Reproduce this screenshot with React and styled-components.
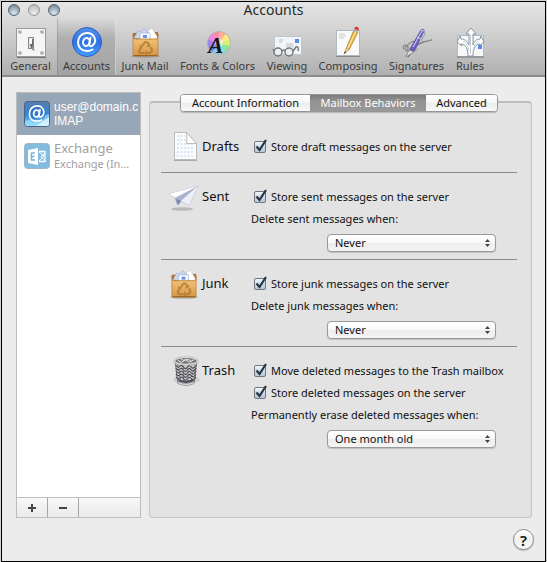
import React, { useState } from "react";
import styled, { createGlobalStyle, css } from "styled-components";

const sans = `"Noto Sans", "Open Sans", sans-serif`;

const GlobalStyle = createGlobalStyle`
  *, *::before, *::after { box-sizing: border-box; }
  body { margin: 0; background: #d4d4d4; font-family: ${sans}; font-size: 11px; color: #111; }
  button, select, input { font: inherit; color: inherit; margin: 0; }
`;

const Window = styled.div`
  display: flex;
  flex-direction: column;
  min-height: calc(100vh - 1px);
  margin: 1px 1px 0;
  border: 1px solid #000;
  background: #ececec;
`;

const Header = styled.header`
  display: flex;
  flex-direction: column;
  height: 75px;
  background: linear-gradient(#e6e6e6, #cfcfcf 45%, #b0b0b0);
  border-bottom: 2px solid #8c8c8c;
`;

const TitleBar = styled.div`
  display: grid;
  grid-template-columns: 60px 1fr 60px;
  align-items: center;
  height: 16px;
  padding: 0 6px;
`;

const Lights = styled.div`
  display: flex;
  gap: 8px;
`;

const Light = styled.button`
  width: 12px;
  height: 12px;
  padding: 0;
  border: 1px solid ${(p) => (p.$pale ? "#999" : "#5b6670")};
  border-radius: 50%;
  background: ${(p) =>
    p.$pale
      ? "radial-gradient(circle at 50% 80%, #eee, #c4c4c4 70%, #aaa)"
      : "radial-gradient(circle at 50% 80%, #dde8ef, #93a4b2 60%, #667580)"};
`;

const Title = styled.h1`
  margin: 0;
  font-size: 14px;
  font-weight: 400;
  line-height: 16px;
  text-align: center;
  color: #2a2a2a;
`;

const Toolbar = styled.nav`
  display: flex;
  flex: 1;
  padding-left: 2px;
`;

const ToolButton = styled.button`
  display: flex;
  flex-direction: column;
  align-items: center;
  justify-content: flex-end;
  flex: 0 0 ${(p) => p.$width}px;
  padding: 0 0 2px;
  border: 0;
  background: none;
  color: #3a3a3a;
  font-size: 11px;
  line-height: 15px;
  white-space: nowrap;
  ${(p) =>
    p.$active &&
    css`
      background: linear-gradient(rgba(0, 0, 0, 0), rgba(0, 0, 0, 0.14) 35%, rgba(0, 0, 0, 0.08));
      border-left: 1px solid rgba(90, 90, 90, 0.25);
      border-right: 1px solid rgba(240, 240, 240, 0.5);
    `}
`;

const Main = styled.main`
  display: flex;
  flex: 1;
  gap: 8px;
  padding: 15px 13px 0 14px;
`;

const Sidebar = styled.aside`
  display: flex;
  flex-direction: column;
  flex: 0 0 125px;
  border: 1px solid #bdbdbd;
  background: #fff;
`;

const AccountList = styled.div`
  flex: 1;
`;

const Account = styled.button`
  display: flex;
  align-items: center;
  gap: 4px;
  width: 100%;
  height: 42px;
  padding: 0 0 0 7px;
  overflow: hidden;
  border: 0;
  text-align: left;
  background: ${(p) => (p.$active ? "#98a7b7" : "#fff")};
  color: ${(p) => (p.$active ? "#fff" : "#a0a0a0")};
  svg { flex: none; }
`;

const AccountText = styled.span`
  display: flex;
  flex-direction: column;
  white-space: nowrap;
  line-height: ${(p) => (p.$plain ? 14 : 15)}px;
  font-size: ${(p) => (p.$plain ? 12 : 13)}px;
  font-family: ${(p) => (p.$plain ? `"Liberation Sans", Arial, sans-serif` : sans)};
`;

const AccountKind = styled.span`
  font-size: ${(p) => (p.$plain ? 12 : 11)}px;
`;

const SidebarFooter = styled.div`
  display: flex;
  height: 20px;
  border-top: 1px solid #bdbdbd;
  background: linear-gradient(#fafafa, #f0f0f0 50%, #ebebeb);
`;

const SmallButton = styled.button`
  display: grid;
  place-items: center;
  width: 31px;
  padding: 0;
  border: 0;
  border-right: 1px solid #a5a5a5;
  background: none;
`;

const Panel = styled.section`
  flex: 1;
  min-width: 0;
  margin-top: 9px;
  padding: 0 14px 0 11px;
  border: 1px solid #c6c6c6;
  border-top: 2px solid #bdbdbd;
  border-radius: 4px;
  background: #e3e3e3;
`;

const Tabs = styled.div`
  display: flex;
  width: 318px;
  height: 18px;
  margin: -9px auto 0;
  border: 1px solid #969696;
  border-radius: 4px;
  overflow: hidden;
  box-shadow: 0 1px 1px rgba(0, 0, 0, 0.2);
`;

const Tab = styled.button`
  flex: ${(p) => p.$grow} 1 0;
  padding: 0;
  border: 0;
  line-height: 16px;
  white-space: nowrap;
  background: linear-gradient(#fff, #f6f6f6 50%, #ececec 52%, #f8f8f8);
  ${(p) =>
    p.$active &&
    css`
      color: #fff;
      background: linear-gradient(#7d7d7d, #929292 40%, #999);
    `}
`;

const Group = styled.div`
  display: grid;
  grid-template-columns: 41px 49px 1fr;
  padding: 13px 0 7px;
  border-bottom: ${(p) => (p.$last ? "0" : "1px solid #8b8b8b")};
`;

const FirstGroup = styled(Group)`
  padding: 24px 0 14px;
`;

const GroupIcon = styled.div`
  display: flex;
  justify-content: flex-end;
  height: 22px;
  padding-right: 3px;
  align-items: center;
  svg { flex: none; overflow: visible; }
`;

const GroupName = styled.h2`
  margin: 0;
  font-size: 13px;
  font-weight: 400;
  line-height: 21px;
`;

const Fields = styled.div`
  display: flex;
  flex-direction: column;
  line-height: 22px;
  white-space: nowrap;
`;

const CheckLabel = styled.label`
  display: flex;
  align-items: center;
  gap: 5px;
  height: 22px;
  padding-left: 3px;
`;

const CheckCell = styled.span`
  display: grid;
  place-items: center;
  width: 12px;
  height: 12px;
  > * { grid-area: 1 / 1; }
  svg { pointer-events: none; overflow: visible; }
`;

const CheckInput = styled.input`
  appearance: none;
  width: 12px;
  height: 12px;
  border: 1px solid #6f7780;
  border-radius: 2px;
  background: linear-gradient(#f4f8fb, #cbd9e4 50%, #b8c9d7);
`;

const SelectBox = styled.div`
  position: relative;
  width: 169px;
  height: 18px;
  margin: 4px 0 0 76px;
  svg {
    position: absolute;
    right: 6px;
    top: 5px;
    pointer-events: none;
  }
`;

const Select = styled.select`
  display: block;
  appearance: none;
  width: 100%;
  height: 18px;
  padding: 0 20px 0 7px;
  border: 1px solid #999;
  border-radius: 4px;
  background: linear-gradient(#fff, #f8f8f8 50%, #ededed 52%, #f5f5f5);
  box-shadow: 0 1px 1px rgba(0, 0, 0, 0.15);
  line-height: 16px;
`;

const Footer = styled.footer`
  display: flex;
  justify-content: flex-end;
  padding: 11px 11px 11px 0;
`;

const HelpButton = styled.button`
  width: 21px;
  height: 21px;
  padding: 0;
  border: 1px solid #8c8c8c;
  border-radius: 50%;
  background: linear-gradient(#fff, #f0f0f0 50%, #fafafa);
  box-shadow: 0 1px 1px rgba(0, 0, 0, 0.25);
  font-size: 15px;
  font-weight: 600;
  line-height: 18px;
`;

const GeneralIcon = () => (
  <svg width="32" height="31" viewBox="0 0 32 31">
    <rect x="1.5" y="1.5" width="29" height="28" fill="#f5f5f5" stroke="#999" />
    <path d="M2 30.5h29" stroke="#777" />
    {[[5, 5], [27, 5], [5, 26], [27, 26]].map(([x, y]) => (
      <g key={`${x}-${y}`}>
        <circle cx={x} cy={y} r="1.8" fill="#999" />
        <path d={`M${x - 1} ${y + 1}l2-2`} stroke="#eee" strokeWidth=".7" />
      </g>
    ))}
    <rect x="13.5" y="10.5" width="5" height="11" fill="#e4e4e4" stroke="#888" />
    <path d="M15 12h3v5l1 5-3-1-1-3z" fill="#666" />
    <path d="M15 12h2v5h-2z" fill="#fff" />
    <path d="M17 18l3 6-3-1z" fill="#999" />
  </svg>
);

const AtGlyph = ({ cx, cy, s }) => (
  <g transform={`translate(${cx} ${cy}) scale(${s})`} fill="none" stroke="#fff" strokeWidth="2" strokeLinecap="round">
    <ellipse cx="-.6" cy=".2" rx="3.3" ry="4" transform="rotate(18)" />
    <path d="M3.500-4.200L2.300 2c-.4 2.500 1.600 2.800 3.300 1.400C8 1.400 8.600-2 7.400-4.600 5.800-8 2.500-9.200-.6-9c-5 .3-8.400 4.500-8.400 9.300C-9 5.500-5.400 9 0 9c2.200 0 4-.5 5.600-1.500" />
  </g>
);

const AtIcon = () => (
  <svg width="32" height="32" viewBox="0 0 32 32">
    <defs>
      <linearGradient id="at-disc" x1="0" y1="0" x2="0" y2="1">
        <stop offset="0" stopColor="#5691e8" />
        <stop offset=".5" stopColor="#2f72e6" />
        <stop offset="1" stopColor="#42a0ff" />
      </linearGradient>
    </defs>
    <circle cx="16" cy="16" r="14.5" fill="url(#at-disc)" stroke="#2b5cc0" />
    <AtGlyph cx={16} cy={16} s={1} />
  </svg>
);

const BagIcon = ({ size = 31 }) => (
  <svg width={size} height={size} viewBox="0 0 31 31">
    <defs>
      <linearGradient id="bag" x1="0" y1="0" x2="0" y2="1">
        <stop offset="0" stopColor="#d39b4b" />
        <stop offset=".3" stopColor="#f0bd70" />
        <stop offset="1" stopColor="#d59645" />
      </linearGradient>
    </defs>
    <ellipse cx="15.5" cy="29.3" rx="14.5" ry="1.5" fill="#777" opacity=".5" />
    <path d="M3 6l25-1v8H3z" fill="#a87431" />
    <path d="M4 11l4-7 3 1 3-4 4 5 1 7z" fill="#c7d7f4" stroke="#98abd2" strokeWidth=".5" />
    <path d="M18 4l4-3 6 10-7 3z" fill="#fff" stroke="#bbb" strokeWidth=".5" />
    <path d="M10 6h10v8H10z" fill="#f8faff" stroke="#9aabd0" strokeWidth=".6" />
    <path d="M13 8h4v3h-4z" fill="#6a93df" />
    <path d="M3 7c0 4 1 5 3 5h19c2 0 3-1 3-5v22H3z" fill="url(#bag)" stroke="#b77a2d" strokeWidth=".7" />
    <path d="M4 28.500h23" stroke="#9a611d" />
    <g opacity=".7">
      <g fill="none" stroke="#a9742f" strokeWidth="2.1">
        <path d="M12 19l3-4h2l3 4" />
        <path d="M21 20l1 4-2 2h-4" />
        <path d="M14 26h-4l-1-2 2-4" />
      </g>
      <path d="M20 16v4h-4zM17 23v6l-3-3zM9 18l4 1-2 4z" fill="#a9742f" />
    </g>
  </svg>
);

const FontsIcon = () => (
  <svg width="28" height="27" viewBox="0 0 28 27">
    {["#ffb18c", "#ffe983", "#d6ef78", "#8fe49b", "#7ee6d5", "#82cdf8", "#6f86f0", "#a67df1", "#ef83e5", "#ff8cad"].map((c, i) => {
      const a = ((i * 36 - 90) * Math.PI) / 180;
      const b = ((i * 36 - 53) * Math.PI) / 180;
      return <path key={c} fill={c} d={`M15 12L${15 + 11.5 * Math.cos(a)} ${12 + 11.5 * Math.sin(a)}A11.5 11.5 0 0 1 ${15 + 11.5 * Math.cos(b)} ${12 + 11.5 * Math.sin(b)}z`} />;
    })}
    <circle cx="15" cy="12" r="4" fill="#fff" opacity=".45" />
    <circle cx="15" cy="12" r="11.5" fill="none" stroke="#aaa" strokeWidth=".7" />
    <text x="4" y="22" fontFamily="Liberation Serif, serif" fontSize="23" fontWeight="bold" fontStyle="italic" fill="#151515">A</text>
  </svg>
);

const ViewingIcon = () => (
  <svg width="32" height="23" viewBox="0 0 32 23">
    <rect x="3.5" y="1.5" width="27" height="18" fill="#f2f5f8" stroke="#bcc5d0" />
    <path d="M8 5h4M8 7h3M15 9h7M15 11h8" stroke="#bbb" />
    <rect x="24" y="4" width="4" height="4" fill="#548bea" />
    <g fill="#e9eef2" fillOpacity=".8" stroke="#777" strokeWidth="1.5">
      <circle cx="7" cy="17" r="4" />
      <circle cx="18" cy="17" r="4" />
      <path d="M11 16q2-2 3 0" fill="none" />
      <path d="M3 16l-1-2M22 16l3-4q3-1 2 4" fill="none" />
    </g>
  </svg>
);

const ComposeIcon = () => (
  <svg width="30" height="32" viewBox="0 0 30 32">
    <rect x="3.5" y="4.5" width="23" height="25" fill="#fafafa" stroke="#aeb8c1" />
    <path d="M3 30.500h24" stroke="#888" />
    <path d="M6 8h6M6 10h7M6 12h5" stroke="#ccc" strokeWidth="1.2" />
    <path d="M13 23l8-19 4 2-9 18-5 4z" fill="#f2b13d" stroke="#9b7436" strokeWidth=".7" />
    <path d="M15 22l8-17" stroke="#ffe18c" strokeWidth="1.5" />
    <path d="M21 4l1-3q3-1 4 2l-2 4z" fill="#db3a30" />
    <path d="M20.500 5l1-2 4 2-1 2z" fill="#b9bdc3" />
    <path d="M13 23l3 1-5 4z" fill="#e7caa0" />
    <path d="M11 28l1-3 1 1z" fill="#222" />
  </svg>
);

const SignatureIcon = () => (
  <svg width="32" height="31" viewBox="0 0 32 31">
    <path d="M3 22c-3-3 3-6 4-2 1 5-5 4-2 0C10 14 15 12 14 18c4-2 8-4 17-5-9 2-15 4-25 12" fill="none" stroke="#858585" strokeWidth="1.2" />
    <path d="M4 29q8-4 13-7" stroke="#aaa" strokeWidth="2" fill="none" />
    <path d="M9 22L20 3q3-2 3 1l-9 19-7 7z" fill="#6961ba" stroke="#514a98" strokeWidth=".7" />
    <path d="M12 20L21 4" stroke="#c2bdf1" strokeWidth="1.3" />
    <path d="M8 23l5 2-8 5z" fill="#ddd" stroke="#777" strokeWidth=".6" />
    <path d="M16 10l4 2M20 3l3 1" stroke="#d7d7df" />
    <path d="M23 3l1 4-4 7" fill="none" stroke="#9999b4" />
  </svg>
);

const RulesIcon = () => (
  <svg width="31" height="31" viewBox="0 0 31 31">
    <rect x="2.5" y="8.5" width="26" height="21" fill="#f6f8fa" stroke="#a9bdcc" />
    <path d="M2 30h27" stroke="#777" />
    <path d="M13 29c0-7-2-12-7-12l1 2-5-4 3-6 1 3c4 0 6 2 8 6V7h-3l5-6 5 6h-3v11c1-4 4-6 7-6l1-3 3 6-5 4 1-2c-5 0-7 5-7 12z" fill="#fff" stroke="#87949d" />
    <path d="M15.500 8v19M8 14q5 2 6 10M24 14q-5 2-6 10" fill="none" stroke="#c3ccd2" />
    <rect x="23" y="18" width="4" height="4" fill="#548bea" />
  </svg>
);

const MailAppIcon = () => (
  <svg width="26" height="26" viewBox="0 0 26 26">
    <defs>
      <linearGradient id="mail-app" x1="0" y1="0" x2="0" y2="1">
        <stop offset="0" stopColor="#587fae" />
        <stop offset=".5" stopColor="#3585d2" />
        <stop offset="1" stopColor="#6edbff" />
      </linearGradient>
    </defs>
    <rect x=".5" y=".5" width="25" height="25" rx="3" fill="url(#mail-app)" stroke="#456487" />
    <path d="M1 20q11-4 24-7v10q0 2-2 2H3q-2 0-2-2z" fill="#b5eaff" opacity=".55" />
    <path d="M12 25l13-9v7q0 2-2 2z" fill="#fff" opacity=".6" />
    <circle cx="13" cy="12" r="9" fill="#2370c4" opacity=".55" />
    <AtGlyph cx={13} cy={12.5} s={0.85} />
  </svg>
);

const ExchangeIcon = () => (
  <svg width="26" height="26" viewBox="0 0 26 26">
    <rect x=".5" y=".5" width="25" height="25" rx="3" fill="#84bce0" stroke="#9fb6c6" />
    <path d="M4 7l10-2v17L4 20z" fill="#fff" />
    <path d="M7 10h4M7 13.500h3.500M7 17h4M7.500 10v7" stroke="#78b2d8" strokeWidth="1.5" />
    <path d="M15 8.500h6v10h-6" fill="none" stroke="#fff" strokeWidth="1.3" />
    <path d="M15 9l5 4-5 5M21 10l-4 3.500 4 4" fill="none" stroke="#fff" />
  </svg>
);

const DraftsIcon = () => (
  <svg width="26" height="30" viewBox="0 0 26 30">
    <path d="M1.500 .5h12l10 11v16h-22z" fill="#fbfcfe" stroke="#bbb" />
    <path d="M1 28.500h23" stroke="#aaa" />
    <path d="M4 4h8M4 8h9M4 12h17M4 16h17M4 20h17M4 24h17" stroke="#b7d0ee" strokeDasharray="2 1.5" />
    <path d="M8 3L3 25M12 12l4 13" stroke="#d5e0ef" strokeDasharray="1 2" />
    <path d="M13.500 .5q1 7 0 11h10z" fill="#fff" stroke="#bbb" />
  </svg>
);

const SentIcon = () => (
  <svg width="31" height="28" viewBox="0 0 31 28">
    <ellipse cx="14" cy="26" rx="11" ry="1.8" fill="#999" opacity=".55" />
    <path d="M1 11L30 3 21 22l-8-4-3 4-3-7z" fill="#f5f7fd" stroke="#b0b6ca" strokeWidth=".8" />
    <path d="M7 15L30 3 13 18l-4 4z" fill="#a9b1cd" />
    <path d="M13 18L30 3 21 22z" fill="#eceffa" />
    <path d="M1 11L30 3 6 14z" fill="#fff" />
    <path d="M8 16l5 2-3 4z" fill="#7b87b2" />
  </svg>
);

const TrashIcon = () => (
  <svg width="26" height="31" viewBox="0 0 27 31">
    <ellipse cx="14" cy="24" rx="14" ry="4" fill="#bbb" opacity=".5" />
    <path d="M2 4l3 23q8 5 17 0l3-23z" fill="#c3c5ca" stroke="#777" />
    <g fill="none" stroke="#4a4a4c" strokeWidth="1.1">
      {[9, 12, 15, 18, 21].map((y) => (
        <path key={y} d={`M3 ${y}q2 3 4 1t4 1 4 0 4 0 5-2`} />
      ))}
      <path d="M5 8l3 17M10 9l1 17M16 9v17M22 8l-3 17" strokeDasharray="1 2" />
    </g>
    <path d="M5 23q8 4 17 0l-1 3q-7 3-15 0z" fill="#4a4b59" />
    <path d="M5 26q8 4 17 0v2q-8 4-17 0z" fill="#dedee5" stroke="#777" strokeWidth=".6" />
    <ellipse cx="13.5" cy="4.5" rx="12" ry="3.8" fill="#777" stroke="#eee" strokeWidth="1.5" />
    <path d="M5 4l4 2 4-3 4 3 5-3M8 2l3 2 5-1 3 2" stroke="#eee" fill="none" />
    <ellipse cx="13.5" cy="4.5" rx="12.7" ry="4.3" fill="none" stroke="#888" strokeWidth=".5" />
  </svg>
);

const Checkbox = ({ children }) => (
  <CheckLabel>
    <CheckCell>
      <CheckInput type="checkbox" defaultChecked />
      <svg width="12" height="12" viewBox="0 0 12 12">
        <path d="M2.500 5.500L5.500 9 12-1" fill="none" stroke="#24333f" strokeWidth="2.2" />
      </svg>
    </CheckCell>
    {children}
  </CheckLabel>
);

const Dropdown = ({ id, label, options }) => (
  <>
    <label htmlFor={id}>{label}</label>
    <SelectBox>
      <Select id={id}>
        {options.map((o) => (
          <option key={o}>{o}</option>
        ))}
      </Select>
      <svg width="5" height="8" viewBox="0 0 5 8">
        <path d="M0 3l2.500-3L5 3zM0 5l2.500 3L5 5z" fill="#444" />
      </svg>
    </SelectBox>
  </>
);

const tools = [
  ["General", 53, GeneralIcon],
  ["Accounts", 59, AtIcon],
  ["Junk Mail", 58, BagIcon],
  ["Fonts & Colors", 87, FontsIcon],
  ["Viewing", 52, ViewingIcon],
  ["Composing", 70, ComposeIcon],
  ["Signatures", 67, SignatureIcon],
  ["Rules", 40, RulesIcon],
];

const tabs = [
  ["Account Information", 129],
  ["Mailbox Behaviors", 116],
  ["Advanced", 71],
];

export default function App() {
  const [tool, setTool] = useState("Accounts");
  const [tab, setTab] = useState("Mailbox Behaviors");
  return (
    <>
      <GlobalStyle />
      <Window>
        <Header>
          <TitleBar>
            <Lights>
              <Light aria-label="Close" />
              <Light aria-label="Minimize" $pale />
              <Light aria-label="Zoom" />
            </Lights>
            <Title>Accounts</Title>
          </TitleBar>
          <Toolbar>
            {tools.map(([name, width, Icon]) => (
              <ToolButton key={name} $width={width} $active={tool === name} onClick={() => setTool(name)}>
                <Icon />
                {name}
              </ToolButton>
            ))}
          </Toolbar>
        </Header>
        <Main>
          <Sidebar>
            <AccountList>
              <Account $active>
                <MailAppIcon />
                <AccountText $plain>
                  user@domain.c
                  <AccountKind $plain>IMAP</AccountKind>
                </AccountText>
              </Account>
              <Account>
                <ExchangeIcon />
                <AccountText>
                  Exchange
                  <AccountKind>Exchange (In…</AccountKind>
                </AccountText>
              </Account>
            </AccountList>
            <SidebarFooter>
              <SmallButton aria-label="Add account">
                <svg width="8" height="8" viewBox="0 0 8 8"><path d="M4 0v8M0 4h8" stroke="#444" strokeWidth="2" /></svg>
              </SmallButton>
              <SmallButton aria-label="Remove account">
                <svg width="8" height="8" viewBox="0 0 8 8"><path d="M0 4h8" stroke="#444" strokeWidth="2" /></svg>
              </SmallButton>
            </SidebarFooter>
          </Sidebar>
          <Panel>
            <Tabs role="tablist">
              {tabs.map(([name, grow]) => (
                <Tab key={name} role="tab" aria-selected={tab === name} $grow={grow} $active={tab === name} onClick={() => setTab(name)}>
                  {name}
                </Tab>
              ))}
            </Tabs>
            <FirstGroup>
              <GroupIcon><DraftsIcon /></GroupIcon>
              <GroupName>Drafts</GroupName>
              <Fields>
                <Checkbox>Store draft messages on the server</Checkbox>
              </Fields>
            </FirstGroup>
            <Group>
              <GroupIcon><SentIcon /></GroupIcon>
              <GroupName>Sent</GroupName>
              <Fields>
                <Checkbox>Store sent messages on the server</Checkbox>
                <Dropdown id="sent" label="Delete sent messages when:" options={["Never", "One day old", "One week old", "One month old"]} />
              </Fields>
            </Group>
            <Group>
              <GroupIcon><BagIcon size={30} /></GroupIcon>
              <GroupName>Junk</GroupName>
              <Fields>
                <Checkbox>Store junk messages on the server</Checkbox>
                <Dropdown id="junk" label="Delete junk messages when:" options={["Never", "One day old", "One week old", "One month old"]} />
              </Fields>
            </Group>
            <Group $last>
              <GroupIcon><TrashIcon /></GroupIcon>
              <GroupName>Trash</GroupName>
              <Fields>
                <Checkbox>Move deleted messages to the Trash mailbox</Checkbox>
                <Checkbox>Store deleted messages on the server</Checkbox>
                <Dropdown id="trash" label="Permanently erase deleted messages when:" options={["One month old", "One week old", "One day old", "Never"]} />
              </Fields>
            </Group>
          </Panel>
        </Main>
        <Footer>
          <HelpButton aria-label="Help">?</HelpButton>
        </Footer>
      </Window>
    </>
  );
}
